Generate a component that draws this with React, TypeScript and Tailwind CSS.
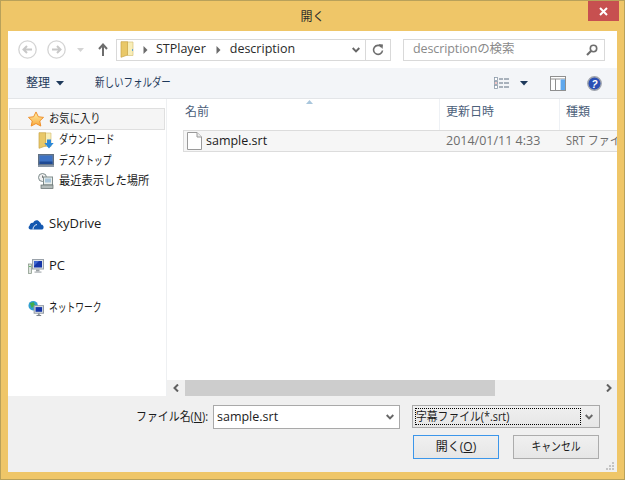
import React from "react";

const CJK = "font-['Open_Sans','Noto_Sans_CJK_JP',sans-serif]";

const Chevron = () => (
  <svg width="8" height="6" viewBox="0 0 8 6" className="block">
    <path d="M0.7 1 L4 4.4 L7.3 1" fill="none" stroke="#666" strokeWidth="1.9" />
  </svg>
);

const SmallArrow = () => (
  <svg width="5" height="8" viewBox="0 0 5 8" className="block">
    <path d="M0.5 0 L4.5 4 L0.5 8 Z" fill="#6b6b6b" />
  </svg>
);

const DownTri = () => (
  <svg width="8" height="5" viewBox="0 0 8 5" className="block">
    <path d="M0 0 L8 0 L4 4.5 Z" fill="#1e395b" />
  </svg>
);

const NavCircle = ({ flip = false }: { flip?: boolean }) => (
  <svg width="19" height="19" viewBox="0 0 19 19" className="block">
    <circle cx="9.5" cy="9.5" r="8.7" fill="#fff" stroke="#d4d4d4" strokeWidth="1.3" />
    <path
      d={flip ? "M5 9.5 H13 M10 6 L13.5 9.5 L10 13" : "M14 9.5 H6 M9 6 L5.5 9.5 L9 13"}
      fill="none"
      stroke="#c8c8c8"
      strokeWidth="2"
    />
  </svg>
);

const FolderIcon = ({ download = false }: { download?: boolean }) => (
  <svg width="16" height="17" viewBox="0 0 16 17" className="block">
    <path d="M7 1 H13 V14.5 H7 Z" fill="#f8eeb8" stroke="#d8c27a" strokeWidth="0.7" />
    <path d="M1 0.7 H7.5 V14 L1 16.3 Z" fill="#e9c868" stroke="#c8a548" strokeWidth="0.7" />
    {download ? (
      <path d="M9 7.5 H13 V11 H15.7 L11 16.5 L6.3 11 H9 Z" fill="#2d88d8" />
    ) : (
      <rect x="12" y="8" width="1" height="2" fill="#5ba3d8" />
    )}
  </svg>
);

const StarIcon = () => (
  <svg width="17" height="16" viewBox="0 0 17 16" className="block">
    <defs>
      <linearGradient id="st" x1="0" y1="0" x2="0" y2="1">
        <stop offset="0" stopColor="#fff0a8" />
        <stop offset="1" stopColor="#f8a83c" />
      </linearGradient>
    </defs>
    <path
      d="M8.5 0.5 L11 5.6 L16.5 6.3 L12.5 10.1 L13.6 15.5 L8.5 12.8 L3.4 15.5 L4.5 10.1 L0.5 6.3 L6 5.6 Z"
      fill="url(#st)"
      stroke="#ee8c24"
      strokeWidth="1"
    />
  </svg>
);

const DesktopIcon = () => (
  <svg width="16" height="13" viewBox="0 0 16 13" className="block">
    <rect x="0.5" y="0.5" width="15" height="10.5" fill="#6d7f94" stroke="#5f6f82" />
    <rect x="1.5" y="1.5" width="13" height="8.5" fill="#3d72c4" />
    <rect x="1.5" y="7.5" width="13" height="2.5" fill="#1f4a94" />
    <rect x="0" y="11" width="16" height="2" fill="#8896a6" />
  </svg>
);

const RecentIcon = () => (
  <svg width="16" height="16" viewBox="0 0 16 16" className="block">
    <circle cx="4.5" cy="4.5" r="4" fill="#f1f1f1" stroke="#7d8a8a" />
    <path d="M4.5 2.5 V4.5 H6.5" fill="none" stroke="#555" strokeWidth="0.8" />
    <rect x="5.5" y="4" width="9" height="8" fill="#e8eeec" stroke="#7f8c8c" />
    <rect x="7" y="5.5" width="6" height="4" fill="#a8c4d8" />
    <rect x="3" y="12" width="12" height="3.5" fill="#b4bcbb" stroke="#5f6a6a" strokeWidth="0.7" />
  </svg>
);

const CloudIcon = () => (
  <svg width="16" height="11" viewBox="0 0 16 11" className="block">
    <path
      d="M2.5 10.5 C0.5 10.5 0 8 1.5 6.8 C2 4.5 3.5 3.5 5 4 C6 1 10 0 11.5 3 C12.5 3.5 13 4.5 13 5.5 C15 5.5 16 7.5 15.5 9 C15.2 10 14.5 10.5 13.5 10.5 Z"
      fill="#1458b0"
    />
    <path d="M5 10.5 C5 8 6.5 6 9 5.5" fill="none" stroke="#fff" strokeWidth="0.9" />
  </svg>
);

const PcIcon = () => (
  <svg width="16" height="15" viewBox="0 0 16 15" className="block">
    <rect x="0.5" y="5" width="3" height="9.5" fill="#dfe3df" stroke="#7f907f" strokeWidth="0.7" />
    <rect x="1.2" y="7" width="1.6" height="1" fill="#4caf50" />
    <rect x="4.5" y="0.5" width="11" height="9.5" fill="#dde2e6" stroke="#9aa2aa" />
    <rect x="6" y="2" width="8" height="6.5" fill="#1636a8" />
    <path d="M6 2 H11 L6 7 Z" fill="#3d66d0" />
    <rect x="8" y="10.5" width="3.5" height="2" fill="#9aa0a4" />
    <rect x="6.5" y="12.5" width="7" height="1.2" fill="#aab0b4" />
  </svg>
);

const NetworkIcon = () => (
  <svg width="17" height="17" viewBox="0 0 17 17" className="block">
    <circle cx="5.5" cy="5.5" r="5" fill="#2f9fd0" />
    <path d="M2 3 L6 1.5 L7.5 5 L4 8 Z" fill="#3fae4a" />
    <rect x="6.5" y="5.5" width="10" height="8" fill="#dde2e6" stroke="#8f979f" />
    <rect x="8" y="7" width="7" height="5" fill="#1636a8" />
    <rect x="10.5" y="13.5" width="2" height="2" fill="#8f979f" />
    <rect x="9" y="15.5" width="5" height="1" fill="#6f777f" />
  </svg>
);

const FileIcon = () => (
  <svg width="15" height="18" viewBox="0 0 15 18" className="block">
    <path d="M0.5 0.5 H10 L14.5 5 V17.5 H0.5 Z" fill="#fff" stroke="#9a9a9a" />
    <path d="M10 0.5 V5 H14.5" fill="#ececec" stroke="#9a9a9a" />
  </svg>
);

export default function App() {
  return (
    <div className={`w-[625px] h-[480px] flex flex-col border border-[#b9a15a] bg-[#efc668] overflow-hidden ${CJK}`}>
      {/* title bar */}
      <div className="h-[30px] shrink-0 grid grid-cols-[1fr_auto_1fr]">
        <div />
        <div className="text-[12px] text-[#2b2b2b] leading-[30px] translate-y-[1px]">開く</div>
        <div className="flex justify-end pr-[5px]">
          <div className="w-[31px] h-[20px] bg-[#c75050] flex items-center justify-center">
            <svg width="9" height="9" viewBox="0 0 9 9">
              <path d="M1 1 L8 8 M8 1 L1 8" stroke="#fff" strokeWidth="2" />
            </svg>
          </div>
        </div>
      </div>

      <div className="mx-[7px] mb-[7px] flex-1 flex flex-col min-h-0 bg-white">
        {/* address row */}
        <div className="h-[37px] shrink-0 flex items-center pl-[10px] pr-[12px]">
          <NavCircle />
          <span className="w-[10px]" />
          <NavCircle flip />
          <span className="ml-[11px] mr-[14px]">
            <svg width="7" height="4" viewBox="0 0 7 4" className="block">
              <path d="M0 0 H7 L3.5 4 Z" fill="#d4d4d4" />
            </svg>
          </span>
          <svg width="10" height="13" viewBox="0 0 10 13" className="block">
            <path d="M5 13 V2 M1 6 L5 1.5 L9 6" fill="none" stroke="#6d6d6d" strokeWidth="2" />
          </svg>
          <div className="ml-[8px] w-[275px] h-[22px] border border-[#d9d9d9] flex items-center">
            <span className="ml-[3px]">
              <FolderIcon />
            </span>
            <span className="ml-[7px]">
              <SmallArrow />
            </span>
            <span className="ml-[8px] text-[12.5px] text-[#2a2a2a]">STPlayer</span>
            <span className="ml-[10px]">
              <SmallArrow />
            </span>
            <span className="ml-[9px] text-[12.5px] text-[#2a2a2a]">description</span>
            <span className="ml-auto mr-[5px]">
              <Chevron />
            </span>
            <div className="w-[25px] h-full border-l border-[#d9d9d9] flex items-center justify-center">
              <svg width="12" height="12" viewBox="0 0 12 12">
                <path d="M9.5 3 A4.5 4.5 0 1 0 10.5 6.5" fill="none" stroke="#6d6d6d" strokeWidth="1.6" />
                <path d="M6.5 0 L11 0.5 L10.5 5 Z" fill="#6d6d6d" />
              </svg>
            </div>
          </div>
          <div className="ml-[12px] flex-1 h-[22px] border border-[#d9d9d9] flex items-center pl-[9px] pr-[6px]">
            <span className="text-[12.5px] text-[#8a8a8a] tracking-[-0.1px]">descriptionの検索</span>
            <svg width="12" height="12" viewBox="0 0 12 12" className="ml-auto">
              <circle cx="7.5" cy="4.5" r="3.2" fill="none" stroke="#6d6d6d" strokeWidth="1.6" />
              <path d="M5 7 L1 11" stroke="#6d6d6d" strokeWidth="2.2" />
            </svg>
          </div>
        </div>

        {/* command bar */}
        <div className="h-[31px] shrink-0 bg-[#f3f5f8] border-b border-[#e3e5e8] flex items-center pl-[18px] pr-[15px]">
          <span className="text-[12px] text-[#1e395b]">整理</span>
          <span className="ml-[6px]">
            <DownTri />
          </span>
          <span className="ml-[31px] w-[76px] text-[12px] text-[#1e395b] whitespace-nowrap inline-block origin-left scale-x-[0.79]">
            新しいフォルダー
          </span>
          <svg width="15" height="12" viewBox="0 0 15 12" className="ml-auto">
            <rect x="0.5" y="0.5" width="3" height="3" fill="#fff" stroke="#8a99a8" strokeWidth="0.8" />
            <rect x="0.5" y="4.5" width="3" height="3" fill="#fff" stroke="#8a99a8" strokeWidth="0.8" />
            <rect x="1.5" y="5.5" width="1" height="1" fill="#d02020" />
            <rect x="0.5" y="8.5" width="3" height="3" fill="#fff" stroke="#8a99a8" strokeWidth="0.8" />
            <path d="M5 2 H9 M10 2 H15 M5 6 H9 M10 6 H15 M5 10 H9 M10 10 H15" stroke="#5f6f80" />
          </svg>
          <span className="ml-[11px]">
            <DownTri />
          </span>
          <svg width="16" height="15" viewBox="0 0 16 15" className="ml-[22px]">
            <rect x="0.5" y="0.5" width="15" height="14" fill="#fff" stroke="#8f8f8f" />
            <path d="M0.5 3 H15.5 M5.5 3 V14" stroke="#8f8f8f" />
            <rect x="10" y="3.5" width="5" height="10.5" fill="#b8d8f8" />
            <rect x="11" y="3.5" width="4" height="10.5" fill="#5fa8ee" />
          </svg>
          <svg width="15" height="15" viewBox="0 0 15 15" className="ml-[21px]">
            <circle cx="7.5" cy="7.5" r="6.7" fill="#2a4fb4" stroke="#a0a4ac" strokeWidth="1.4" />
            <text x="7.5" y="11.5" textAnchor="middle" fontSize="10" fontWeight="700" fontStyle="italic" fill="#fff" fontFamily="Liberation Sans">
              ?
            </text>
          </svg>
        </div>

        {/* panes */}
        <div className="flex-1 flex min-h-0">
          {/* nav pane */}
          <div className="w-[159px] shrink-0 border-r border-[#eef0f2] pt-[9px] pl-[1px] text-[12px] text-[#1b1b1b] whitespace-nowrap">
            <div className="h-[22px] bg-[#f5f5f5] border border-[#dfdfdf] flex items-center pl-[18px] gap-[5px] w-[156px]">
              <span className="w-[16px] flex justify-center">
                <StarIcon />
              </span>
              <span className="inline-block origin-left scale-x-[0.86]">お気に入り</span>
            </div>
            <div className="flex items-center h-[20.5px] pl-[29px] gap-[5px]">
              <span className="w-[16px] flex justify-center items-center">
                <FolderIcon download />
              </span>
              <span className="inline-block origin-left scale-x-[0.77]">ダウンロード</span>
            </div>
            <div className="flex items-center h-[20.5px] pl-[29px] gap-[5px]">
              <span className="w-[16px] flex justify-center items-center">
                <DesktopIcon />
              </span>
              <span className="inline-block origin-left scale-x-[0.73]">デスクトップ</span>
            </div>
            <div className="flex items-center h-[20.5px] pl-[29px] gap-[5px]">
              <span className="w-[16px] flex justify-center items-center">
                <RecentIcon />
              </span>
              <span className="inline-block origin-left scale-x-[0.94]">最近表示した場所</span>
            </div>
            <div className="flex items-center h-[21px] mt-[22px] pl-[19px] gap-[5px]">
              <span className="w-[16px] flex justify-center items-center">
                <CloudIcon />
              </span>
              <span className="text-[13px]">SkyDrive</span>
            </div>
            <div className="flex items-center h-[21px] mt-[21px] pl-[19px] gap-[5px]">
              <span className="w-[16px] flex justify-center items-center">
                <PcIcon />
              </span>
              <span className="text-[13px]">PC</span>
            </div>
            <div className="flex items-center h-[21px] mt-[21px] pl-[19px] gap-[5px]">
              <span className="w-[16px] flex justify-center items-center">
                <NetworkIcon />
              </span>
              <span className="inline-block origin-left scale-x-[0.73]">ネットワーク</span>
            </div>
          </div>

          {/* file list */}
          <div className="flex-1 min-w-0 flex flex-col relative">
            <svg width="7" height="4" viewBox="0 0 7 4" className="absolute left-[139px] top-[1px]">
              <path d="M3.5 0 L7 4 H0 Z" fill="#a9c6dc" />
            </svg>
            <div className="h-[31px] shrink-0 flex text-[12px] text-[#4c607a]">
              <div className="w-[273px] pl-[18px] pt-[4px] border-r border-[#eef1f5]">名前</div>
              <div className="w-[120px] pl-[6px] pt-[4px] border-r border-[#eef1f5]">更新日時</div>
              <div className="flex-1 pl-[6px] pt-[4px]">種類</div>
            </div>
            <div className="ml-[16px] h-[22px] shrink-0 flex items-center bg-[#f6f6f6] border-y border-[#dcdcdc] border-l overflow-hidden whitespace-nowrap text-[12.5px]">
              <span className="ml-[3px] shrink-0">
                <FileIcon />
              </span>
              <span className="ml-[4px] w-[240px] shrink-0 text-[#1b1b1b]">sample.srt</span>
              <span className="w-[120px] shrink-0 text-[#6d6d6d]">2014/01/11 4:33</span>
              <span className="shrink-0 text-[#6d6d6d] inline-block origin-left scale-x-[0.88]">SRT ファイル</span>
            </div>
            <div className="flex-1" />
            {/* scrollbar */}
            <div className="h-[16px] shrink-0 bg-[#f0f0f0] flex items-center">
              <div className="w-[18px] flex justify-center">
                <svg width="6" height="8" viewBox="0 0 6 8">
                  <path d="M5 0.5 L1.5 4 L5 7.5" fill="none" stroke="#606060" strokeWidth="2" />
                </svg>
              </div>
              <div className="w-[310px] h-full bg-[#cdcdcd]" />
              <div className="ml-auto w-[17px] flex justify-center">
                <svg width="6" height="8" viewBox="0 0 6 8">
                  <path d="M1 0.5 L4.5 4 L1 7.5" fill="none" stroke="#606060" strokeWidth="2" />
                </svg>
              </div>
            </div>
          </div>
        </div>

        {/* bottom panel */}
        <div className="h-[76px] shrink-0 bg-[#f0f0f0] relative pt-[9px] pl-[128px]">
          <div className="flex items-start">
            <span className="w-[71px] h-[24px] leading-[24px] text-[12px] text-[#1b1b1b] whitespace-nowrap inline-block origin-left scale-x-[0.91]">
              ファイル名(<span className="underline">N</span>):
            </span>
            <div className="ml-[6px] w-[187px] h-[24px] bg-white border border-[#a9a9a9] flex items-center pl-[3px] pr-[5px]">
              <span className="text-[12.5px] text-[#1b1b1b]">sample.srt</span>
              <span className="ml-auto">
                <Chevron />
              </span>
            </div>
            <div className="ml-[12px] w-[188px] h-[23px] bg-gradient-to-b from-[#f0f0f0] to-[#e6e6e6] border border-[#a9a9a9] flex items-center pl-[2px] pr-[5px]">
              <span className="w-[166px] h-[17px] border border-dotted border-black flex items-center text-[12px] text-[#1b1b1b] whitespace-nowrap">
                <span className="inline-block origin-left scale-x-[0.9]">字幕ファイル(*.srt)</span>
              </span>
              <span className="ml-auto mr-[1px]">
                <Chevron />
              </span>
            </div>
          </div>
          <div className="mt-[6px] flex justify-end gap-[14px] pr-[18px]">
            <div className="w-[86px] h-[24px] border border-[#3c96ea] bg-gradient-to-b from-[#f0f0f0] to-[#e6e6e6] flex items-center justify-center text-[12px] text-[#1b1b1b]">
              <span>
                開く(<span className="underline">O</span>)
              </span>
            </div>
            <div className="w-[86px] h-[24px] border border-[#acacac] bg-gradient-to-b from-[#f0f0f0] to-[#e6e6e6] flex items-center justify-center text-[12px] text-[#1b1b1b]">
              <span className="inline-block scale-x-[0.82]">キャンセル</span>
            </div>
          </div>
          {/* resize grip */}
          <svg width="8" height="8" viewBox="0 0 8 8" className="absolute right-[3px] bottom-[2px]">
            <path d="M6 0 h2 v2 h-2 Z M3 3 h2 v2 h-2 Z M6 3 h2 v2 h-2 Z M0 6 h2 v2 h-2 Z M3 6 h2 v2 h-2 Z M6 6 h2 v2 h-2 Z" fill="#c4c4c4" />
          </svg>
        </div>
      </div>
    </div>
  );
}
